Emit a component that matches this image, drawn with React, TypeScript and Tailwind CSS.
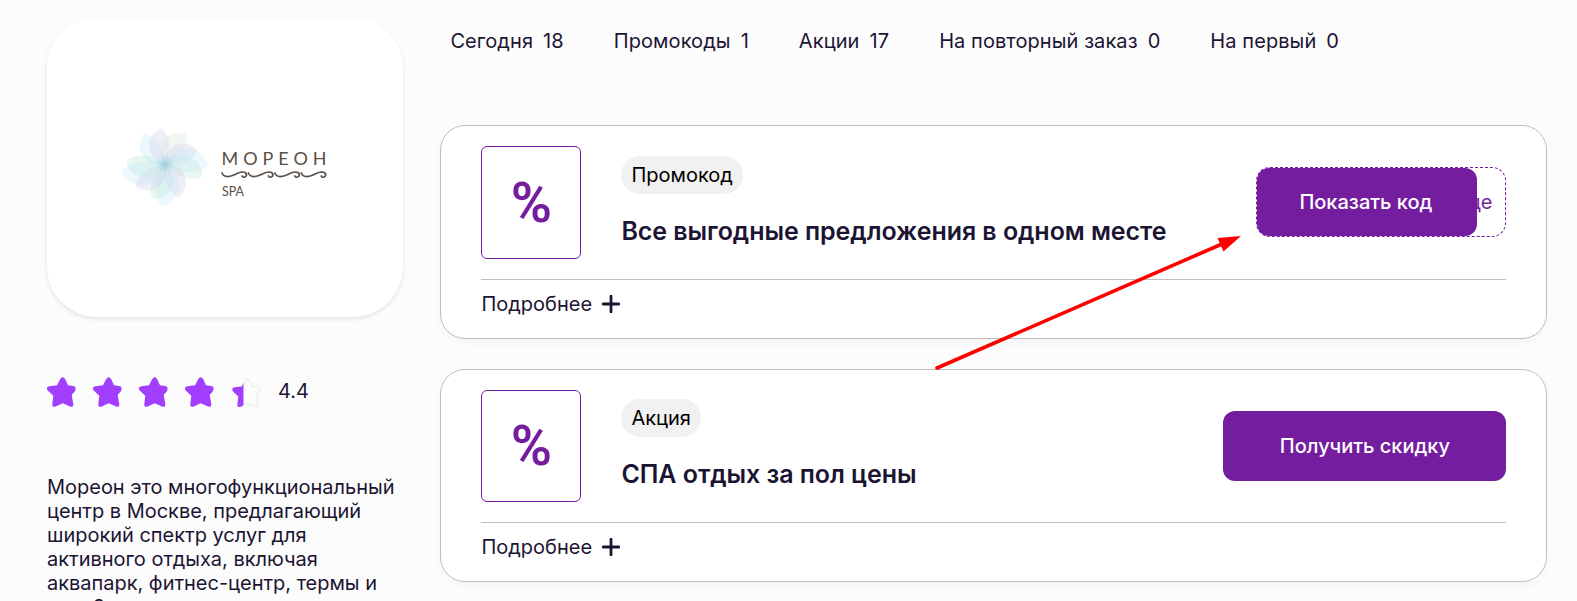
import React from 'react'

type Tab = { label: string; count: number }

type Offer = {
  kind: string
  title: string
  code?: string
}

const TABS: Tab[] = [
  { label: 'Сегодня', count: 18 },
  { label: 'Промокоды', count: 1 },
  { label: 'Акции', count: 17 },
  { label: 'На повторный заказ', count: 0 },
  { label: 'На первый', count: 0 },
]

const OFFERS: Offer[] = [
  { kind: 'Промокод', title: 'Все выгодные предложения в одном месте', code: 'це' },
  { kind: 'Акция', title: 'СПА отдых за пол цены' },
]

// Petals of the logo flower: angle (clockwise from up), length and tint
const PETALS = [
  { angle: -36, length: 37, fill: '#bfe9fb' },
  { angle: -8, length: 36, fill: '#cdc6e6' },
  { angle: 32, length: 37, fill: '#cfe8dc' },
  { angle: 65, length: 35, fill: '#cdc6e6' },
  { angle: 90, length: 43, fill: '#bfe9fb' },
  { angle: 106, length: 39, fill: '#b5e5d8' },
  { angle: 155, length: 36, fill: '#cdc6e6' },
  { angle: 182, length: 42, fill: '#bfe9fb' },
  { angle: 197, length: 37, fill: '#b5e5d8' },
  { angle: 230, length: 37, fill: '#cdc6e6' },
  { angle: 256, length: 44, fill: '#bfe9fb' },
  { angle: 272, length: 39, fill: '#b5e5d8' },
]

const STAR_PATH =
  'M15.700 .2C17 .2 17.800 1.500 18.500 2.800L21 8.200L26.300 9C28.500 9.300 29 10.500 28.300 13.200C27.800 15.500 24.800 16.500 24.800 18.800L26.300 27C26.500 29.600 25 30.300 23 29.500L15.700 26.200L8.800 29.500C6.800 30.300 5 29.600 5.300 27L6.300 18.800L1.200 14C-.9 11.800-.3 9.600 2.500 9.200L10 8.200L12.800 2.800C13.500 1.500 14.400 .2 15.700 .2Z'

const Logo: React.FC = () => (
  <svg width="206" height="80" viewBox="0 0 206 80" aria-hidden="true">
    <radialGradient id="flower-core">
      <stop offset="0" stopColor="#5fb0c4" stopOpacity="0.5" />
      <stop offset="1" stopColor="#8fd0de" stopOpacity="0" />
    </radialGradient>
    <g transform="translate(43 37)">
      {PETALS.map(({ angle, length, fill }) => (
        <path
          key={angle}
          d="M0 0C-21 -9 -18 -34 1 -40C11 -34 9 -11 0 0Z"
          fill={fill}
          fillOpacity="0.3"
          transform={`rotate(${angle}) scale(${length / 40})`}
        />
      ))}
      <circle r="10" fill="url(#flower-core)" />
    </g>
    <text x="99.500" y="37.500" fill="#5b5047" fontFamily="Lato, sans-serif" fontSize="18" textLength="105" lengthAdjust="spacing">
      МОРЕОН
    </text>
    <g fill="none" stroke="#5b5047" strokeWidth="1.700" strokeLinecap="round">
      {[0, 26.400, 52.800, 79.200].map((x) => (
        <path key={x} transform={`translate(${100 + x} 45)`} d="M0 1C2 6 8 5 13 2.500C18 0 23 -1 24.500 2C25 5 21 6.500 20 4" />
      ))}
    </g>
    <text x="100" y="68.500" fill="#5b5047" fontFamily="Lato, sans-serif" fontSize="12.500" textLength="22" lengthAdjust="spacingAndGlyphs">
      SPA
    </text>
  </svg>
)

const Stars: React.FC = () => (
  <div className="flex gap-4">
    {[0, 1, 2, 3].map((i) => (
      <svg key={i} className="h-[30px] w-[30px] overflow-visible" viewBox="0 0 30 30" aria-hidden="true">
        <path d={STAR_PATH} fill="#a23fff" />
      </svg>
    ))}
    <svg className="h-[30px] w-[30px]" viewBox="0 0 30 30" aria-hidden="true">
      <clipPath id="rating-part">
        <rect width="12.500" height="30" />
      </clipPath>
      <g transform="translate(1.400 1.600) scale(0.95)">
        <path d={STAR_PATH} fill="none" stroke="#efefef" strokeWidth="1.500" />
      </g>
      <g clipPath="url(#rating-part)">
        <path d={STAR_PATH} fill="#a23fff" transform="translate(1.400 1.600) scale(0.95)" />
      </g>
    </svg>
  </div>
)

const OfferCard: React.FC<{ offer: Offer }> = ({ offer }) => (
  <article className="h-[213.2px] rounded-[25px] border border-[#bfbfbf] bg-white px-10 pt-5 shadow-[0_4px_10px_rgba(0,0,0,0.03)]">
    <div className="flex h-[133.8px] items-start border-b border-[#bfbfbf]">
      <div className="flex h-[112.5px] w-[100px] shrink-0 items-center justify-center rounded-[6px] border border-[#741e9f] font-['Roboto',sans-serif] text-[56px] leading-none font-semibold text-[#741e9f]">
        <span>%</span>
      </div>
      <div className="ml-10 pt-[9.5px]">
        <span className="inline-flex h-[38px] items-center rounded-full bg-[#f1f1f1] px-[10px] text-[20px] text-black">
          {offer.kind}
        </span>
        <h2 className="mt-[22px] text-[25px] leading-[30px] font-semibold tracking-[-0.05px]">{offer.title}</h2>
      </div>
      {offer.code ? (
        <div className="relative mt-[21px] ml-auto flex h-[70px] w-[250px] items-center justify-end rounded-[14px] border border-dashed border-[#741e9f] pr-[13px] text-[20px] text-[#741e9f]">
          <span>{offer.code}</span>
          <button className="absolute inset-y-0 left-0 w-[220px] rounded-xl bg-[#741e9f] pr-[3px] text-[20px] font-medium text-white">
            Показать код
          </button>
        </div>
      ) : (
        <button className="mt-[21px] ml-auto h-[70px] w-[283px] rounded-xl bg-[#741e9f] text-[20px] font-medium text-white">
          Получить скидку
        </button>
      )}
    </div>
    <button className="mt-3 flex items-center gap-[10px] text-[20px] leading-6">
      Подробнее
      <svg className="h-[18px] w-[18px]" viewBox="0 0 18 18" aria-hidden="true">
        <path d="M9 1.200v15.600M1.200 9h15.600" stroke="#1c1433" strokeWidth="2.800" strokeLinecap="round" />
      </svg>
    </button>
  </article>
)

export default function App() {
  return (
    <main className="relative flex h-[601px] w-[1577px] overflow-hidden bg-[#fcfcfc] pl-[47px] font-['Inter',sans-serif] text-[#1c1433]">
      <aside className="w-[356px] shrink-0 pt-[17px]">
        <div className="flex h-[300px] items-center justify-center rounded-[50px] bg-white shadow-[0_2px_4px_rgba(0,0,0,0.1)]">
          <Logo />
        </div>
        <div className="mt-[60px] flex items-start">
          <Stars />
          <span className="ml-[17px] text-[20px] leading-[28px]">4.4</span>
        </div>
        <p className="mt-[69px] text-[20px] leading-[23.9px] tracking-[-0.02px]">
          Мореон это многофункциональный центр в Москве, предлагающий широкий спектр услуг для активного отдыха, включая
          аквапарк, фитнес-центр, термы и спа. Здесь
        </p>
      </aside>

      <section className="ml-[37.400px] w-[1107px] shrink-0">
        <nav className="flex h-[125.4px] gap-[50px] pt-[29px] pl-[10px] text-[20px] leading-6 tracking-[0.08px]">
          {TABS.map((tab) => (
            <a key={tab.label} className="flex h-6 gap-[10px] whitespace-nowrap">
              <span>{tab.label}</span>
              <span>{tab.count}</span>
            </a>
          ))}
        </nav>
        <div className="flex flex-col gap-[30px]">
          {OFFERS.map((offer) => (
            <OfferCard key={offer.title} offer={offer} />
          ))}
        </div>
      </section>

      <svg className="pointer-events-none absolute inset-0" width="1577" height="601" aria-hidden="true">
        <path d="M937 368L1222 244" stroke="#fe0000" strokeWidth="3.600" strokeLinecap="round" />
        <path d="M1241 236L1217.500 238L1223.500 251.500Z" fill="#fe0000" />
      </svg>
    </main>
  )
}
